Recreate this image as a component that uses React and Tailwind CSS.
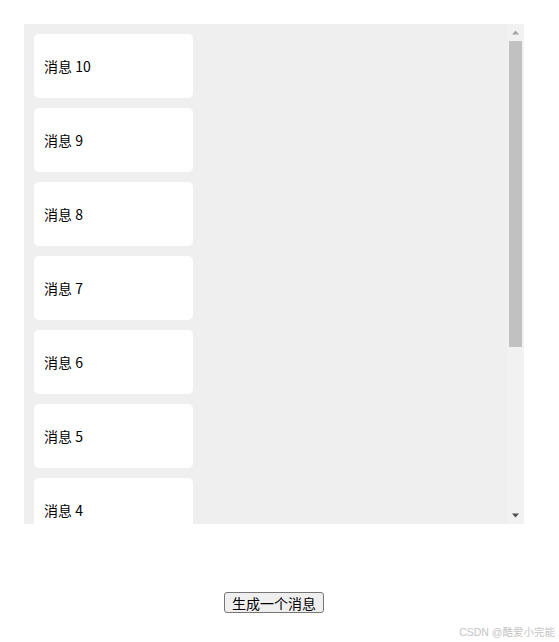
import React, { useState } from "react";

export default function App() {
  const [count, setCount] = useState(10);
  const items = [];
  for (let i = count; i >= 1; i--) items.push(i);
  const font = { fontFamily: '"Microsoft YaHei", "Noto Sans CJK SC", "Noto Sans", sans-serif' };
  return (
    <div className="relative w-[559px] h-[642px] bg-white" style={font}>
      <div className="pt-[24px] pl-[24px]">
        <div className="flex w-[500px] h-[500px] bg-[#efefef]">
          <div className="flex-1 overflow-hidden flex flex-col gap-[10px] pt-[10px] pl-[10px]">
            {items.map((n) => (
              <div
                key={n}
                className="shrink-0 w-[159px] h-[64px] bg-white rounded-[5px] flex items-center pl-[10px] pb-[1px] text-[14px] leading-[20px] text-black"
              >
                消息 {n}
              </div>
            ))}
          </div>
          <div className="w-[17px] h-full bg-[#f1f1f1] flex flex-col">
            <div className="h-[17px] flex items-center justify-center">
              <svg width="9" height="5" viewBox="0 0 9 5">
                <polygon points="4.5,0.5 8,4.5 1,4.5" fill="#a3a3a3" />
              </svg>
            </div>
            <div className="flex-1 px-[2px]">
              <div className="h-[306px] bg-[#c1c1c1]" />
            </div>
            <div className="h-[17px] flex items-center justify-center">
              <svg width="9" height="5" viewBox="0 0 9 5">
                <polygon points="1,0.5 8,0.5 4.5,4.5" fill="#505050" />
              </svg>
            </div>
          </div>
        </div>
      </div>
      <div className="flex pl-[224px] pt-[68px]">
        <button
          onClick={() => setCount((c) => c + 1)}
          className="w-[100px] h-[21px] bg-[#efefef] border border-[#767676] rounded-[3px] text-[14px] leading-none text-black flex items-center justify-center"
          style={font}
        >
          生成一个消息
        </button>
      </div>
      <div className="absolute right-[4px] bottom-[5px] text-[10.5px] leading-none text-[#c4c4c4]" style={{ fontFamily: '"Liberation Sans", "Noto Sans CJK SC", sans-serif' }}>
        CSDN @酷爱小完能
      </div>
    </div>
  );
}
